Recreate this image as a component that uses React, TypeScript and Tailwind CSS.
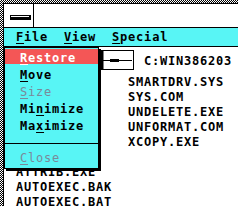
import React from "react";

const rightFiles = ["SMARTDRV.SYS", "SYS.COM", "UNDELETE.EXE", "UNFORMAT.COM", "XCOPY.EXE"];
const leftFiles = ["", "", "", "", "", "", "ATTRIB.EXE", "AUTOEXEC.BAK", "AUTOEXEC.BAT"];

function U({ children }: { children: React.ReactNode }) {
  return <span className="underline decoration-1 underline-offset-[2px]">{children}</span>;
}

export default function App() {
  return (
    <div className="relative w-[238px] h-[206px] overflow-hidden bg-[image:repeating-conic-gradient(#000_0_25%,#fff_0_50%)] bg-[length:2px_2px] pl-[3px] pt-[3px] font-['DejaVu_Sans_Mono',monospace] font-bold text-[12px] tracking-[0.78px] text-black">
      <div className="flex h-full flex-col border-l border-t border-black bg-white">
        {/* title bar */}
        <div className="flex h-[24px] shrink-0 border-b border-black">
          <div className="w-[30px] border-r border-black pl-[6px] pt-[11px]">
            <div className="h-[5px] w-[21px] bg-black pl-[1px] pt-[1px]">
              <div className="h-[1px] w-[18px] bg-white" />
            </div>
          </div>
        </div>
        {/* menu bar */}
        <div className="h-[19px] shrink-0 whitespace-pre border-b border-black bg-[#58f5f5] pl-[12px] leading-[18px]">
          <U>F</U>ile  <U>V</U>iew  <U>S</U>pecial
        </div>
        {/* drive row */}
        <div className="flex h-[28px] shrink-0">
          <svg className="ml-[97px] mt-[3px]" width="33" height="20" viewBox="0 0 33 20">
            <rect x="0.5" y="0.5" width="32" height="19" fill="#fff" stroke="#000" />
            <rect x="1" y="0" width="1.5" height="20" fill="#000" />
            <line x1="2" y1="10.5" x2="31" y2="10.5" stroke="#000" />
            <rect x="9" y="9" width="9" height="3" fill="#000" />
          </svg>
          <div className="ml-[10px] mt-[7px] leading-[15px]">C:WIN386203</div>
        </div>
        {/* file list */}
        <div className="flex">
          <div className="w-[124px] pl-[12px]">
            {leftFiles.map((f, i) => (
              <div key={i} className="h-[15px] leading-[15px]">{f}</div>
            ))}
          </div>
          <div>
            {rightFiles.map((f) => (
              <div key={f} className="h-[15px] leading-[15px]">{f}</div>
            ))}
          </div>
        </div>
      </div>

      {/* control menu popup */}
      <div className="absolute left-[4px] top-[47px] flex h-[122px] w-[95px] flex-col border border-black bg-[#58f5f5] shadow-[2px_2px_0_0_#000]">
        <div className="mb-[1px] mt-[1px] h-[15px] bg-[#f45656] pl-[15px] pt-[2px] leading-[15px] text-white">
          <U>R</U>estore
        </div>
        <div className="h-[17px] pl-[15px] pt-[3px] leading-[15px]">
          <U>M</U>ove
        </div>
        <div className="h-[17px] pl-[15px] pt-[3px] leading-[15px] font-normal text-[#7a8a9a]">
          <U>S</U>ize
        </div>
        <div className="h-[17px] pl-[15px] pt-[3px] leading-[15px]">
          Mi<U>n</U>imize
        </div>
        <div className="h-[17px] pl-[15px] pt-[3px] leading-[15px]">
          Ma<U>x</U>imize
        </div>
        <div className="mt-[10px] h-[1px] bg-black" />
        <div className="mt-[4px] h-[17px] pl-[15px] pt-[3px] leading-[15px] font-normal text-[#7a8a9a]">
          <U>C</U>lose
        </div>
      </div>
    </div>
  );
}
